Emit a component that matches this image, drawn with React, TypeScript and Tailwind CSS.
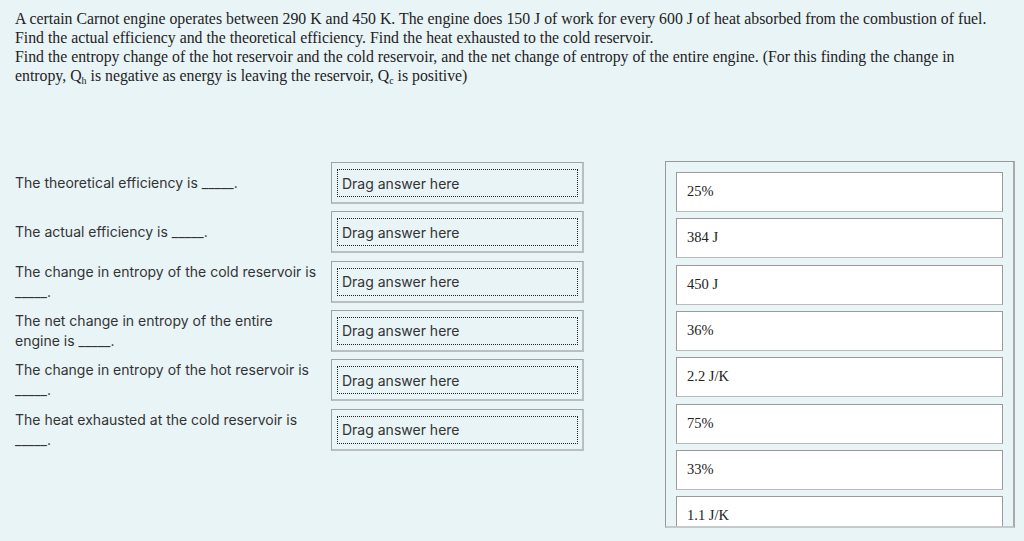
import React from "react";

const B = "_____.";

const labels: React.ReactNode[] = [
  `The theoretical efficiency is ${B}`,
  `The actual efficiency is ${B}`,
  `The change in entropy of the cold reservoir is ${B}`,
  <>The net change in entropy of the entire<br />engine is {B}</>,
  `The change in entropy of the hot reservoir is ${B}`,
  `The heat exhausted at the cold reservoir is ${B}`,
];

const answers = ["25%", "384 J", "450 J", "36%", "2.2 J/K", "75%", "33%", "1.1 J/K"];

export default function App() {
  return (
    <div className="min-h-[541px] w-[1024px] bg-[#e9f4f7] overflow-hidden">
      <div
        className="pl-[15px] pt-[9px] text-[15.8px] leading-[19px] text-[#222]"
        style={{ fontFamily: '"Liberation Serif", serif' }}
      >
        <div className="whitespace-nowrap">
          A certain Carnot engine operates between 290 K and 450 K. The engine does 150 J of work for every 600 J of heat absorbed from the combustion of fuel.
        </div>
        <div className="whitespace-nowrap">
          Find the actual efficiency and the theoretical efficiency. Find the heat exhausted to the cold reservoir.
        </div>
        <div className="whitespace-nowrap">
          Find the entropy change of the hot reservoir and the cold reservoir, and the net change of entropy of the entire engine. (For this finding the change in
        </div>
        <div className="whitespace-nowrap">
          entropy, Q<sub className="text-[10px]">h</sub> is negative as energy is leaving the reservoir, Q<sub className="text-[10px]">c</sub> is positive)
        </div>
      </div>

      <div className="mt-[76px] flex items-start pl-[15px]">
        <div
          className="mt-[1px] flex flex-col gap-[7.33px] text-[14px] text-[#333]"
          style={{ fontFamily: 'Inter, "Liberation Sans", sans-serif' }}
        >
          {labels.map((l, i) => (
            <div key={i} className="flex h-[42px] items-center">
              <div className="w-[316px] pr-[6px] leading-[20px]">{l}</div>
              <div className="h-[42px] w-[253px] border-t border-l border-r-2 border-b-2 border-t-[#9ea2a4] border-l-[#9ea2a4] border-r-[#b8bec1] border-b-[#b8bec1] pt-[6px] pb-[5px] pl-[5px] pr-[4px]">
                <div className="flex h-full items-center border border-dotted border-[#222] pl-[4px] text-[14px] text-[#333]">
                  Drag answer here
                </div>
              </div>
            </div>
          ))}
        </div>

        <div
          className="ml-[81px] h-[367px] w-[350px] overflow-hidden border-t border-l border-r-2 border-b-2 border-t-[#999] border-l-[#999] border-r-[#aaa] border-b-[#c4cacc] px-[10px] pt-[10px]"
          style={{ fontFamily: '"Liberation Serif", serif' }}
        >
          <div className="flex flex-col gap-[6.33px]">
            {answers.map((a) => (
              <div
                key={a}
                className="flex h-[40px] shrink-0 items-center border border-[#9a9a9a] border-b-[#bbb] bg-white pl-[10px] text-[14.5px] text-[#222]"
              >
                {a}
              </div>
            ))}
          </div>
        </div>
      </div>
    </div>
  );
}
